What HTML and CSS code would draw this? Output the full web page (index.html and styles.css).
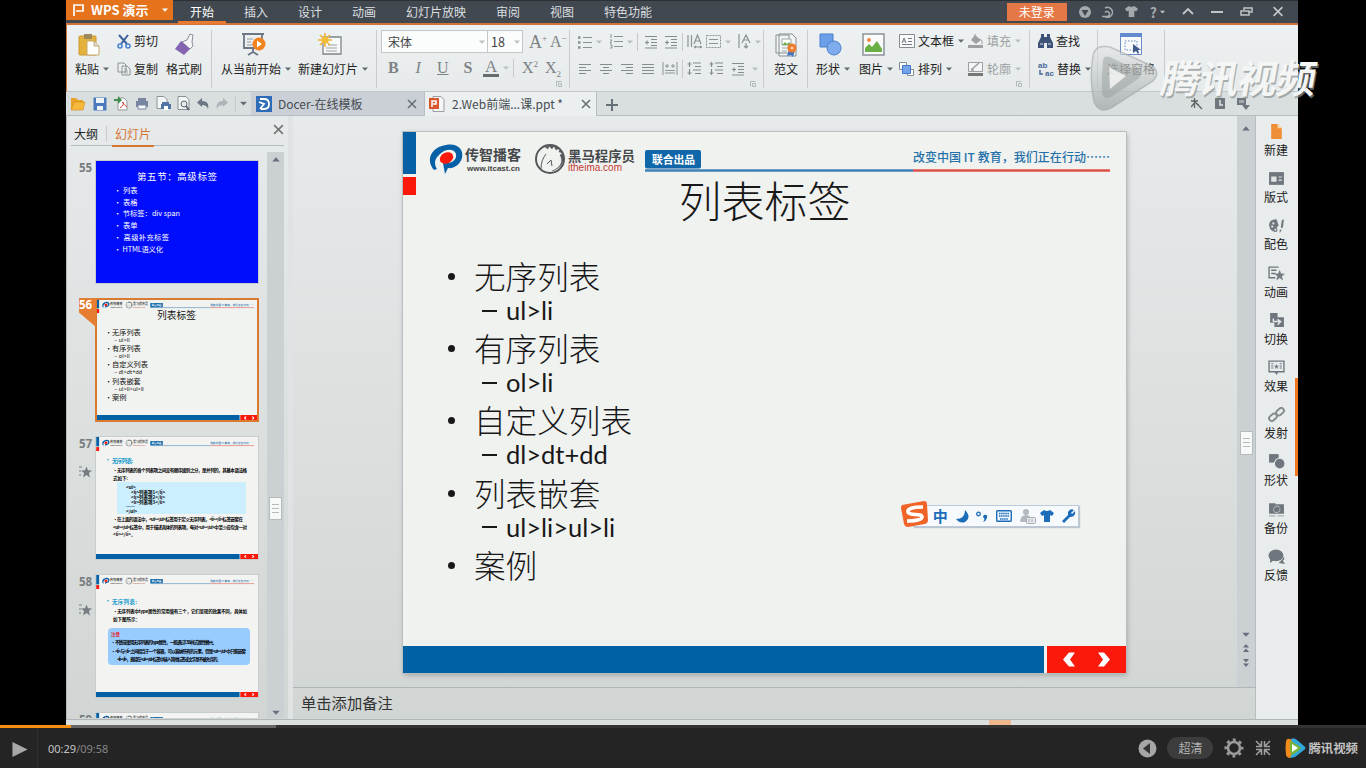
FILE: index.html
```html
<!DOCTYPE html>
<html lang="zh-CN">
<head>
<meta charset="utf-8">
<title>WPS 演示</title>
<link rel="stylesheet" href="styles.css">
</head>
<body>
<svg class="defs" aria-hidden="true">
  <symbol id="arr" viewBox="0 0 6 4"><path d="M0 .5h6L3 3.8z" fill="currentColor"/></symbol>
  <symbol id="lines-l" viewBox="0 0 14 14"><path d="M1 2.5h12M1 5.5h7M1 8.5h12M1 11.5h7" stroke="#868b8e" stroke-width="1.2"/></symbol>
  <symbol id="lines-c" viewBox="0 0 14 14"><path d="M1 2.5h12M4 5.5h6M1 8.5h12M4 11.5h6" stroke="#868b8e" stroke-width="1.2"/></symbol>
  <symbol id="lines-r" viewBox="0 0 14 14"><path d="M1 2.5h12M6 5.5h7M1 8.5h12M6 11.5h7" stroke="#868b8e" stroke-width="1.2"/></symbol>
  <symbol id="lines-j" viewBox="0 0 14 14"><path d="M1 2.5h12M1 5.5h12M1 8.5h12M1 11.5h12" stroke="#868b8e" stroke-width="1.2"/></symbol>
  <symbol id="indent" viewBox="0 0 14 14"><path d="M1 1.5h12M7 4.5h6M7 7.5h6M7 10.5h6M1 13h12M1 7.5h4M3 5.5v4" stroke="#868b8e" stroke-width="1.2"/></symbol>
  <symbol id="spacing" viewBox="0 0 15 15"><path d="M6 2h8M8 5.500h6M6 9h8M8 12.500h6M2.500 1v5M.5 3h4M2.500 8v6M.5 12h4" stroke="#868b8e" stroke-width="1.200"/></symbol>
  <symbol id="launcher" viewBox="0 0 6 6"><path d="M.5 5.500v-5h5M2.500 2.500h3v3h-3z" fill="none" stroke="#a5aaad" stroke-width=".8"/></symbol>
  <symbol id="close" viewBox="0 0 10 10"><path d="M1 1l8 8M9 1L1 9" stroke="currentColor" stroke-width="1.500"/></symbol>
  <symbol id="shirt" viewBox="0 0 14 14"><path d="M4 1q3 2 6 0l4 3-2 3-2-1v7H4V6L2 7 0 4z" fill="currentColor"/></symbol>
  <symbol id="star" viewBox="0 0 12 12"><path d="M6 0l1.600 4.200L12 4.400 8.600 7.200 9.800 12 6 9.200 2.200 12l1.200-4.800L0 4.400l4.400-.2z" fill="#777c82"/></symbol>
  <symbol id="slide-head" viewBox="0 0 723 64">
    <rect width="13" height="42" y="0" x="0" fill="#0660a6"/><rect y="45" width="13" height="18" fill="#fb190c"/>
    <path d="M31 38C22 27 29 15 43 13 54 11 61 17 59 26 57 33 50 37 45 36L42 42 40 31C49 32 54 28 53 22 51 16 42 17 37 22 31 27 31 32 34 37z" fill="#0660a6"/>
    <ellipse cx="43.500" cy="26" rx="7" ry="5.500" transform="rotate(-28 43.500 26)" fill="#fb190c"/>
    <text x="62" y="28" class="logo-cn" textLength="56">传智播客</text>
    <text x="64" y="39" class="logo-en" textLength="53">www.itcast.cn</text>
    <circle cx="147" cy="27" r="14" fill="none" stroke="#53585b" stroke-width="2"/>
    <path d="M142 15l3 2 1-3 3 3 2-3 2 4 4-2-1 4 4 1-3 2c4 7 0 13-8 16 8-2 13-9 11-16-3-8-10-11-18-8z" fill="#53585b" stroke="#53585b" stroke-width=".4"/>
    <path d="M138 37q0-9 5-15M144 32l4-4 1 6" fill="none" stroke="#53585b"/>
    <text x="165" y="29" class="logo-cn dark" textLength="67">黑马程序员</text>
    <text x="165" y="39" class="logo-red" textLength="54">itheima.com</text>
    <path d="M242 38.500h268" stroke="#3c80b6" stroke-width="2.400"/><path d="M510 38.500h197" stroke="#df5249" stroke-width="2.400"/>
    <rect x="242" y="18" width="56" height="18.500" rx="2" fill="#0f67aa"/>
    <text x="249" y="31.500" class="badge-txt" textLength="43">联合出品</text>
    <text x="510" y="30" class="slogan" textLength="197">改变中国 IT 教育，我们正在行动⋯⋯</text>
  </symbol>
  <symbol id="slide-foot" viewBox="0 0 723 27" preserveAspectRatio="none">
    <path d="M0 0h641v27H0z" fill="#0260a5"/><path d="M644 0h79v27h-79z" fill="#fb190c"/>
    <path d="M660 13.500l6-7h6l-5 7 5 7h-6zM707 13.500l-6-7h-6l5 7-5 7h6z" fill="#fff"/>
  </symbol>
</svg>

<main class="stage">
<div class="app">
  <header class="titlebar">
    <div class="brand"><svg width="12" height="12" viewBox="0 0 12 12"><path d="M2 12V1h9v6H4" fill="none" stroke="#fff" stroke-width="1.700"/></svg><b>WPS 演示</b><svg class="a w" width="6" height="4"><use href="#arr"/></svg></div>
    <nav class="menu"><span class="on">开始</span><span>插入</span><span>设计</span><span>动画</span><span>幻灯片放映</span><span>审阅</span><span>视图</span><span>特色功能</span></nav>
    <div class="wincontrols">
      <span class="login">未登录</span>
      <svg width="12" height="12" viewBox="0 0 12 12"><circle cx="6" cy="6" r="6" fill="#a4a9ad"/><path d="M2.500 4h7L6 10z" fill="#41484f"/></svg>
      <svg width="12" height="12" viewBox="0 0 12 12"><path d="M3 2a5 5 0 1 1-1 8M0 10.500h5a2.500 2.500 0 1 0-2-4" fill="none" stroke="#a4a9ad" stroke-width="1.500"/></svg>
      <svg width="13" height="13" color="#a4a9ad"><use href="#shirt"/></svg>
      <span class="q">?<svg class="a" width="5" height="4"><use href="#arr"/></svg></span>
      <svg class="up" width="12" height="7" viewBox="0 0 12 7"><path d="M1 6l5-5 5 5" fill="none" stroke="#c1c5c8" stroke-width="1.800"/></svg>
      <svg class="mn" width="12" height="12" viewBox="0 0 12 12"><path d="M0 6h12" stroke="#c1c5c8" stroke-width="2"/></svg>
      <svg class="rs" width="13" height="10" viewBox="0 0 13 10"><path d="M4 3V1h8v4H9M1 4h8v4H1z" fill="none" stroke="#c1c5c8" stroke-width="1.500"/></svg>
      <svg class="cl" width="12" height="11" color="#c1c5c8" viewBox="0 0 10 10"><use href="#close"/></svg>
    </div>
  </header>

  <section class="ribbon">
    <div class="group g-clip">
      <div class="big"><svg width="22" height="24" viewBox="0 0 22 24"><rect x="1" y="3" width="17" height="19" rx="1" fill="#e5b13d" stroke="#c99735"/><path d="M6 1h8v5H6z" fill="#9d8a58"/><path d="M9 8h7l5 5v9H9z" fill="#fff" stroke="#c5a86a"/><path d="M16 8v5h5" fill="#ddd" stroke="#c5a86a"/></svg><span>粘贴<svg class="a" width="6" height="4"><use href="#arr"/></svg></span></div>
      <div class="two">
        <span><svg width="14" height="15" viewBox="0 0 14 15"><path d="M2 1l8 9M11 1L4 10" stroke="#3e5f9d" stroke-width="2"/><circle cx="3" cy="12" r="2" fill="none" stroke="#4a83cf" stroke-width="1.600"/><circle cx="11" cy="12" r="2" fill="none" stroke="#4a83cf" stroke-width="1.600"/></svg>剪切</span>
        <span><svg width="14" height="14" viewBox="0 0 14 14"><path d="M1 1h6l2 2v7H1zM5 4h5l3 3v6H5z" fill="#eef0f0" stroke="#899097"/><path d="M7 7h3M7 9h4M7 11h4" stroke="#899097" stroke-width=".7"/></svg>复制</span>
      </div>
      <div class="big brush"><svg width="20" height="23" viewBox="0 0 20 23"><path d="M8 9l5-2 3-6 3 1-1 7 1 4-3 3z" fill="#f5f5f7" stroke="#8d8a9a"/><path d="M7 8l9 8-6 6L1 16z" fill="#8464b0"/></svg><span>格式刷</span></div>
    </div>
    <div class="group g-show">
      <div class="big s1"><svg width="25" height="23" viewBox="0 0 25 23"><path d="M1 1h22M3 1v14h18V1M12 15v4M7 22l5-3 5 3" fill="none" stroke="#6d7684" stroke-width="1.800"/><path d="M6 6h6M6 9h4M6 12h6" stroke="#929aa3"/><circle cx="18" cy="11" r="6.500" fill="#f2831c"/><path d="M16 7.500l5 3.500-5 3.500z" fill="#fff"/></svg><span>从当前开始<svg class="a" width="6" height="4"><use href="#arr"/></svg></span></div>
      <div class="big s2"><svg width="25" height="23" viewBox="0 0 25 23"><path d="M5 4h18v17H5z" fill="#f8f9f9" stroke="#7e848a" stroke-width="1.300"/><path d="M10 12h9M8 15h11M8 18h11" stroke="#9ba1a6"/><path d="M7 0v14M0 7h14M2 2l10 10M12 2L2 12" stroke="#edb33c" stroke-width="1.600"/><circle cx="7" cy="7" r="3.500" fill="#f5bc38"/></svg><span>新建幻灯片<svg class="a" width="6" height="4"><use href="#arr"/></svg></span></div>
    </div>
    <div class="group g-font">
      <div class="r1"><span class="combo">宋体<svg class="a l" width="6" height="4"><use href="#arr"/></svg></span><span class="combo num">18<svg class="a l" width="6" height="4"><use href="#arr"/></svg></span><span class="serif big-a">A<sup>+</sup></span><span class="serif sm-a">A<sup>−</sup></span></div>
      <div class="r2 serif"><b>B</b><i>I</i><u>U</u><b class="st">S</b><b class="ca">A</b><svg class="a l" width="6" height="4"><use href="#arr"/></svg><em class="bar"></em><span class="x">X<sup>2</sup></span><span class="x">X<sub>2</sub></span></div>
      <svg class="launch" width="6" height="6"><use href="#launcher"/></svg>
    </div>
    <div class="group g-para">
      <div class="ic"><svg width="14" height="14" viewBox="0 0 14 14"><path d="M5 2.500h9M5 7.500h9M5 12.500h9" stroke="#8c9194"/><path d="M0 2.500h2.500M0 7.500h2.500M0 12.500h2.500" stroke="#8c9194" stroke-width="2.500"/></svg><svg class="a l m4" width="6" height="4"><use href="#arr"/></svg>
        <svg class="m7" width="14" height="15" viewBox="0 0 14 15"><path d="M5 2.500h9M5 7.500h9M5 12.500h9" stroke="#8c9194"/><path d="M2 0v4M1 6h2L1 9h2M1 11h2v3H1" fill="none" stroke="#8c9194"/></svg><svg class="a l m4" width="6" height="4"><use href="#arr"/></svg><em class="bar"></em>
        <svg class="m6" width="14" height="14"><use href="#indent"/></svg><svg class="m6" width="14" height="14"><use href="#indent"/></svg><em class="bar"></em>
        <svg class="m4" width="15" height="15" viewBox="0 0 15 15"><path d="M1 1v12M4.500 1v12M7 10L10.500 1 14 10M8.500 7h4M8 13h6m-5-1-1.500 1L9 14m4-2 1.500 1-1.500 1" fill="none" stroke="#8c9194" stroke-width="1.200"/></svg>
        <svg class="m4" width="15" height="13" viewBox="0 0 15 13"><rect x=".5" y=".5" width="14" height="12" fill="none" stroke="#8c9194" stroke-dasharray="2 1"/><path d="M3 4.500h9M3 8.500h9" stroke="#8c9194"/></svg><svg class="a l m4" width="6" height="4"><use href="#arr"/></svg>
        <svg class="m7" width="13" height="15" viewBox="0 0 13 15"><path d="M1 0v14M4 9L8 1l4 8M6 6h4M8 9v5M6 12l2 2 2-2" fill="none" stroke="#8c9194" stroke-width="1.200"/></svg><svg class="a l m4" width="6" height="4"><use href="#arr"/></svg></div>
      <div class="ic low"><svg width="14" height="14"><use href="#lines-l"/></svg><svg width="14" height="14"><use href="#lines-c"/></svg><svg width="14" height="14"><use href="#lines-r"/></svg><svg width="14" height="14"><use href="#lines-j"/></svg>
        <svg width="16" height="13" viewBox="0 0 16 13"><path d="M1 0v13M15 0v13M3 4h4m2 0h4M5 2v4M11 2v4M3 8.500h10M3 11h10" stroke="#8c9194"/></svg><em class="bar"></em>
        <svg width="15" height="15"><use href="#spacing"/></svg><svg width="15" height="15"><use href="#spacing"/></svg><svg width="14" height="14"><use href="#indent"/></svg><svg class="a l" width="6" height="4"><use href="#arr"/></svg></div>
      <svg class="launch" width="6" height="6"><use href="#launcher"/></svg>
    </div>
    <div class="group g-doc"><div class="big"><svg width="23" height="24" viewBox="0 0 23 24"><path d="M1 2h13v18H1zM4 1h13l4 4v18H4z" fill="#f2f4f4" stroke="#868d94"/><path d="M7 6h9v6H7z" fill="#fff" stroke="#9aa"/><path d="M7 12l3-3 2 2 2-2 2 3z" fill="#6fb04d"/><path d="M7 15h6M7 18h5" stroke="#9aa"/><path d="M14 17l-2 6 4-1 2 2 2-7z" fill="#4072bd"/><circle cx="17" cy="15" r="4.500" fill="#ed7b2b"/><circle cx="17" cy="15" r="1.600" fill="#fac79c"/></svg><span>范文</span></div></div>
    <div class="group g-draw">
      <div class="big"><svg width="23" height="23" viewBox="0 0 23 23"><path d="M1 1h13v13H1z" fill="#6c9fe8" stroke="#4b7fcb"/><circle cx="15" cy="15" r="7" fill="#7eacec" stroke="#4b7fcb"/></svg><span>形状<svg class="a" width="6" height="4"><use href="#arr"/></svg></span></div>
      <div class="big"><svg width="23" height="23" viewBox="0 0 23 23"><path d="M1 1h21v21H1z" fill="#fafafa" stroke="#8c9399" stroke-width="1.500"/><circle cx="7" cy="7" r="2" fill="#ed8b48"/><path d="M3 19v-4l4-4 3 3 5-6 5 8v3z" fill="#6bae45"/></svg><span>图片<svg class="a" width="6" height="4"><use href="#arr"/></svg></span></div>
      <div class="two t1"><span><svg width="16" height="14" viewBox="0 0 16 14"><path d="M.5.5h15v13H.5z" fill="#fafafa" stroke="#858c93"/><path d="M3 9l2-5 2 5M4 7h2M9 4.500h4M9 7.500h4M3 10.500h10" fill="none" stroke="#747b84"/></svg>文本框<svg class="a" width="6" height="4"><use href="#arr"/></svg></span>
        <span><svg width="16" height="14" viewBox="0 0 16 14"><path d="M.5.500h7v7h-7zM8.500 7.500h6v6h-6z" fill="#fff" stroke="#848c95"/><path d="M3.500 3.500h8v8h-8z" fill="#76a3ec" stroke="#4479ca"/></svg>排列<svg class="a" width="6" height="4"><use href="#arr"/></svg></span></div>
      <div class="two t2"><span><svg width="16" height="14" viewBox="0 0 16 14"><path d="M7 1l6 5-5 4-5-4zM0 11h15v3H0z" fill="#9da1a4"/><path d="M12 5q3 2 2 5M7 0v5" stroke="#9da1a4" fill="none"/></svg>填充<svg class="a l" width="6" height="4"><use href="#arr"/></svg></span>
        <span><svg width="16" height="14" viewBox="0 0 16 14"><path d="M.5.500h14v9H.5z" fill="#f4f5f5" stroke="#9b9fa3"/><path d="M3 8l8-7M3 8l3 0" stroke="#9b9fa3" stroke-width="1.500"/><path d="M0 11h15v3H0z" fill="#777"/></svg>轮廓<svg class="a l" width="6" height="4"><use href="#arr"/></svg></span></div>
      <svg class="launch" width="6" height="6"><use href="#launcher"/></svg>
    </div>
    <div class="group g-find"><div class="two">
      <span><svg width="15" height="14" viewBox="0 0 15 14"><path d="M3 0h3v3h3V0h3v3l3 6v5H9V9H6v5H0V9l3-6z" fill="#3d5277"/><path d="M2 10h3M10 10h3" stroke="#dbe1e6"/></svg>查找</span>
      <span><svg class="abac" width="16" height="14" viewBox="0 0 16 14"><text x="0" y="6">ab</text><text x="7" y="14">ac</text><path d="M2 8v4h3" fill="none" stroke="#48699b" stroke-width="1.500"/></svg>替换<svg class="a" width="6" height="4"><use href="#arr"/></svg></span></div></div>
    <div class="group g-sel"><div class="big"><svg width="22" height="22" viewBox="0 0 22 22"><path d="M.5.500h21v21H.5z" fill="#f7f9fb" stroke="#6b8cc8"/><path d="M0 0h22v4H0z" fill="#6389ce"/><path d="M5 8h12v9H5z" fill="none" stroke="#6586b8" stroke-dasharray="1.500 1.500"/><path d="M13 11v9l3-2 2 3 1-1-1-3h3z" fill="#405a87"/></svg><span>选择窗格</span></div></div>
  </section>

  <section class="tabs">
    <div class="quick">
      <svg width="16" height="14" viewBox="0 0 16 14"><path d="M1 12V1h5l2 2h5v3" fill="#eaa42c"/><path d="M4 5h11l-2 8H1z" fill="#f7b93b" stroke="#cf8c20" stroke-width=".6"/></svg>
      <svg width="14" height="14" viewBox="0 0 14 14"><path d="M.5.500h13v13H.5z" fill="#4a79bd"/><path d="M3 1h8v5H3zM4 9h6v4H4z" fill="#eef3f8"/></svg>
      <svg width="14" height="15" viewBox="0 0 14 15"><path d="M4 2h6l3 3v9H4z" fill="#fafafa" stroke="#999"/><path d="M0 3h4V0l4 4-4 4V5H0z" fill="#418e50"/><path d="M6 12q5-4 3-6-2 0 4 5" fill="none" stroke="#d6423c"/></svg>
      <svg width="14" height="13" viewBox="0 0 14 13"><path d="M3 1h8v3H3zM1 4h12v6H1z" fill="#7885a0"/><path d="M3 8h8v4H3z" fill="#f9fafb" stroke="#7885a0"/></svg>
      <svg width="15" height="15" viewBox="0 0 15 15"><path d="M1 .500h7l3 3v9H1z" fill="#f5f6f6" stroke="#8a929e"/><path d="M6 6h7v2h2v5H5V8h1z" fill="#5275a7"/><path d="M8 10h4v4H8z" fill="#fff"/></svg>
      <svg width="13" height="15" viewBox="0 0 13 15"><path d="M1 .500h8l3 3v10H1z" fill="#f5f6f6" stroke="#8a8f96"/><circle cx="7" cy="8" r="3" fill="#e4eaef" stroke="#5d646f"/><path d="M9 10l3 4" stroke="#5d646f" stroke-width="2"/></svg>
      <svg width="12" height="12" viewBox="0 0 12 12"><path d="M0 4.500L5 0v3c6 0 7 4 6 8-1-3-3-4-6-4v2z" fill="#6d7783"/></svg>
      <svg width="12" height="12" viewBox="0 0 12 12"><path d="M12 4.500L7 0v3C1 3 0 7 1 11c1-3 3-4 6-4v2z" fill="#adb4ba"/></svg>
      <em class="bar"></em><svg class="a" width="7" height="5" viewBox="0 0 6 4"><use href="#arr"/></svg>
    </div>
    <div class="tab docer"><svg width="16" height="16" viewBox="0 0 16 16"><path d="M0 0h16v16H0z" fill="#2e6cb8"/><path d="M4 3h4q5 0 5 5t-5 5H5M3 6l5 2-4 5" fill="none" stroke="#fff" stroke-width="1.800"/></svg><span>Docer-在线模板</span><svg class="x" width="10" height="10"><use href="#close"/></svg></div>
    <div class="tab active"><svg width="16" height="16" viewBox="0 0 16 16"><path d="M4 .500h8l3 3v12H4z" fill="#f5f6f6" stroke="#999fa3"/><path d="M0 2h10v11H0z" fill="#d9572d"/><path d="M3 11V5h4v3H4" fill="none" stroke="#fff" stroke-width="1.500"/></svg><span>2.Web前端...课.ppt *</span><svg class="x" width="10" height="10"><use href="#close"/></svg></div>
    <div class="plus"><svg width="12" height="12" viewBox="0 0 12 12"><path d="M0 6h12M6 0v12" stroke="#667078" stroke-width="2"/></svg></div>
    <div class="tools"><svg width="12" height="12" viewBox="0 0 12 12"><path d="M0 3h7M3.500 0v10M0 9l5-6M4 4l7 7M5 5l3 2" stroke="#5d6264" stroke-width="1.300"/></svg><svg width="10" height="11" viewBox="0 0 10 11"><path d="M0 0h10v11H0z" fill="#70777c"/><path d="M5 2v5h3" fill="none" stroke="#dfe3e3" stroke-width="1.500"/></svg><svg width="13" height="12" viewBox="0 0 13 12"><path d="M0 0h9v7H0zM5 7h8l-4 5z" fill="#70777c"/><path d="M2 2h5v3H2z" fill="#a2a8ab"/></svg></div>
  </section>

  <section class="work">
    <aside class="outline">
      <div class="otabs"><span>大纲</span><em class="bar"></em><span class="on">幻灯片</span><svg width="11" height="11" viewBox="0 0 10 10"><use href="#close"/></svg></div>
      <div class="olist">
        <div class="thumbs">
          <div class="row"><span class="no">55</span>
            <svg class="thumb" width="162" height="122" viewBox="0 0 162 122"><path d="M0 0h162v122H0z" fill="#000cfc"/><g class="blue-t"><text x="41" y="18.500" class="h" textLength="80">第五节：高级标签</text><text x="18" y="32">• 列表</text><text x="18" y="44">• 表格</text><text x="18" y="55" textLength="66">• 节标签：div span</text><text x="18" y="67">• 表单</text><text x="18" y="79" textLength="55">• 高级补充标签</text><text x="18" y="91" textLength="49">• HTML语义化</text></g></svg></div>
          <div class="row sel"><span class="no">56</span>
            <svg class="thumb" width="164" height="124" viewBox="-1 -1 164 124"><path d="M0 0h162v122H0z" fill="#f1f3f0"/><use href="#slide-head" width="162" height="14.300"/><g class="mini"><text x="61" y="20" class="h" textLength="39">列表标签</text><text x="9" y="35.500">•</text><text x="16" y="35.500">无序列表</text><text x="18" y="42.500" class="s">– ul&gt;li</text><text x="9" y="51.500">•</text><text x="16" y="51.500">有序列表</text><text x="18" y="58.500" class="s">– ol&gt;li</text><text x="9" y="68">•</text><text x="16" y="68">自定义列表</text><text x="18" y="75" class="s">– dl&gt;dt+dd</text><text x="9" y="84.500">•</text><text x="16" y="84.500">列表嵌套</text><text x="18" y="91.500" class="s">– ul&gt;li&gt;ul&gt;li</text><text x="9" y="101">•</text><text x="16" y="101">案例</text></g><use href="#slide-foot" y="116" width="162" height="6"/><rect x="0" y="0" width="162" height="122" fill="none" stroke="#dc7930" stroke-width="2"/></svg></div>
          <div class="row"><span class="no">57<svg class="anim" width="13" height="12" viewBox="0 0 13 12"><path d="M0 1h3M0 5h2M0 9h2" stroke="#777c82"/><use href="#star" x="2" width="11" height="12"/></svg></span>
            <svg class="thumb" width="162" height="122" viewBox="0 0 162 122"><path d="M0 0h162v122H0z" fill="#f3f4f2"/><use href="#slide-head" width="162" height="14.300"/><g class="tiny"><text x="9" y="25" class="cy">•</text><text x="16" y="26" class="cy" textLength="21">无序列表:</text><text x="17" y="35" textLength="134">•无序列表的各个列表项之间没有顺序级别之分，是并列的，其基本语法格</text><text x="17" y="43">式如下:</text><path d="M21 45h129v32H21z" fill="#ccefff"/><text x="30" y="52">&lt;ul&gt;</text><text x="35" y="57">&lt;li&gt;列表项1&lt;/li&gt;</text><text x="35" y="62">&lt;li&gt;列表项2&lt;/li&gt;</text><text x="35" y="67">&lt;li&gt;列表项3&lt;/li&gt;</text><text x="30" y="71">……</text><text x="30" y="76">&lt;/ul&gt;</text><text x="17" y="84" textLength="130">•在上面的语法中，&lt;ul&gt;&lt;/ul&gt;标签用于定义无序列表，&lt;li&gt;&lt;/li&gt;标签嵌套在</text><text x="17" y="92" textLength="134">&lt;ul&gt;&lt;/ul&gt;标签中，用于描述具体的列表项，每对&lt;ul&gt;&lt;/ul&gt;中至少应包含一对</text><text x="17" y="99">&lt;li&gt;&lt;/li&gt;。</text></g><use href="#slide-foot" y="117" width="162" height="5"/></svg></div>
          <div class="row"><span class="no">58<svg class="anim" width="13" height="12" viewBox="0 0 13 12"><path d="M0 1h3M0 5h2M0 9h2" stroke="#777c82"/><use href="#star" x="2" width="11" height="12"/></svg></span>
            <svg class="thumb" width="162" height="122" viewBox="0 0 162 122"><path d="M0 0h162v122H0z" fill="#f3f4f2"/><use href="#slide-head" width="162" height="14.300"/><g class="tiny"><text x="9" y="28" class="cy">•</text><text x="16" y="29" class="cy" textLength="25">无序列表:</text><text x="17" y="38" textLength="134">•无序列表中type属性的常用值有三个，它们呈现的效果不同，具体如</text><text x="17" y="46">如下图所示：</text><rect x="12" y="53" width="142" height="37" rx="4" fill="#99ccfe"/><text x="15" y="61" class="re">注意</text><g class="hv"><text x="15" y="69" textLength="106">•  不赞成使用无序列表的type属性，一般通过CSS样式属性替代。</text><text x="15" y="78" textLength="135">•  &lt;li&gt;与&lt;/li&gt;之间相当于一个容器，可以容纳所有的元素，但是&lt;ul&gt;&lt;/ul&gt;中只能嵌套</text><text x="21" y="86" textLength="104">&lt;li&gt;&lt;/li&gt;，直接在&lt;ul&gt;&lt;/ul&gt;标签中输入其他标签或文字是不被允许的。</text></g></g><use href="#slide-foot" y="117" width="162" height="5"/></svg></div>
          <div class="row"><span class="no">59</span><svg class="thumb" width="162" height="122" viewBox="0 0 162 122"><path d="M0 0h162v122H0z" fill="#f3f4f2"/><use href="#slide-head" width="162" height="14.300"/></svg></div>
        </div>
        <div class="sbar"><svg width="8" height="5" color="#687080" class="flip"><use href="#arr"/></svg><div class="grip"><i></i><i></i><i></i></div><svg width="8" height="5" color="#687080"><use href="#arr"/></svg></div>
      </div>
    </aside>

    <div class="main">
      <div class="editor">
        <div class="canvas">
          <article class="slide">
            <svg width="723" height="64"><use href="#slide-head"/></svg>
            <h1>列表标签</h1>
            <ul class="body">
              <li>无序列表<p>ul&gt;li</p></li><li>有序列表<p>ol&gt;li</p></li><li>自定义列表<p>dl&gt;dt+dd</p></li><li>列表嵌套<p>ul&gt;li&gt;ul&gt;li</p></li><li>案例</li>
            </ul>
            <svg class="foot" width="723" height="27"><use href="#slide-foot"/></svg>
            <div class="ime">
              <svg class="sogou" width="28" height="28" viewBox="0 0 28 28"><path d="M1 5L23 1q3 0 3 3l1 16q0 3-3 4L7 27q-3 0-4-3L0 8q0-2 1-3z" fill="#ef6427"/><path d="M22 7Q6 7 7 12c1 4 14 1 14 5 0 3-8 4-15 4" fill="none" stroke="#fff" stroke-width="3.600"/></svg>
              <b>中</b>
              <svg width="13" height="13" viewBox="0 0 13 13"><path d="M9 0q7 7 0 12-5 2-9-3Q9 9 9 0z" fill="#1d6cba"/></svg>
              <svg width="12" height="13" viewBox="0 0 12 13"><circle cx="2.500" cy="4" r="1.800" fill="none" stroke="#1d6cba" stroke-width="1.300"/><path d="M8 5q4-1 3 3-1 3-4 4 2-3 1-4-2-1 0-3z" fill="#1d6cba"/></svg>
              <svg width="16" height="12" viewBox="0 0 16 12"><rect x=".7" y=".7" width="14.600" height="10.600" rx="1" fill="#eef6fc" stroke="#1d6cba" stroke-width="1.400"/><path d="M3 3.500h10M3 6h10M4 9h8" stroke="#1d6cba" stroke-width="1.600" stroke-dasharray="1.500 .6"/></svg>
              <svg width="16" height="15" viewBox="0 0 16 15"><circle cx="6" cy="3" r="3" fill="#b3b9bf"/><path d="M0 12q1-6 6-6 4 0 5 4v3H1z" fill="#b3b9bf"/><rect x="6.500" y="8.500" width="9" height="6" rx="1" fill="#e7e9eb" stroke="#a7acb2"/><path d="M9 10v3M12 10v3" stroke="#a7acb2"/></svg>
              <svg class="skin" width="14" height="14" color="#1d6cba"><use href="#shirt"/></svg>
              <svg width="14" height="14" viewBox="0 0 14 14"><path d="M13 2l-3 3-1-1 3-3Q8-1 6 3v3L0 12l2 2 6-6q6 0 5-6z" fill="#1d6cba"/></svg>
            </div>
          </article>
        </div>
        <div class="sbar right"><svg width="8" height="5" color="#687080" class="flip"><use href="#arr"/></svg><div class="grip"><i></i><i></i><i></i></div><div class="pages"><svg width="8" height="5" color="#687080"><use href="#arr"/></svg><svg width="6" height="8" viewBox="0 0 6 8" color="#687080"><path d="M0 3.500L3 0l3 3.500zM0 8l3-3.500L6 8z" fill="currentColor"/></svg><svg width="6" height="8" viewBox="0 0 6 8"><path d="M0 0h6L3 3.500zM0 4.500h6L3 8z" fill="#687080"/></svg></div></div>
      </div>
      <div class="notes">单击添加备注</div>
    </div>

    <aside class="side">
      <div><svg viewBox="0 0 16 14"><path d="M3 0h6l4 4v10H3z" fill="#ee8e35"/><path d="M9 0v4h4z" fill="#f9d3ad"/></svg>新建</div>
      <div><svg viewBox="0 0 16 14"><path d="M1 1h14v12H1z" fill="#70767e"/><path d="M3 5h5v5H3zM10 5h3v1h-3zM10 8h3v1h-3z" fill="#dfe3e4"/></svg>版式</div>
      <div><svg viewBox="0 0 16 14"><path d="M8 1Q1 1 1 7q1 6 7 6 2-2 0-4l2-2zM13 2l2-1-1 8h-2zM11 11h2l-2 3z" fill="#70767e"/><g fill="#e4e8e9"><circle cx="5" cy="5" r="1"/><circle cx="4" cy="8" r="1"/><circle cx="7" cy="11" r="1"/></g></svg>配色</div>
      <div><svg viewBox="0 0 16 14"><path d="M10 1H1v10h6M3 4h5M3 7h4" fill="none" stroke="#70767e" stroke-width="1.300"/><use href="#star" x="6" y="3" width="10" height="11"/></svg>动画</div>
      <div><svg viewBox="0 0 16 14"><path d="M2 0h7v4h6v9H6V9H2z" fill="#70767e"/><path d="M5 5v3h6M9 6l3 2-3 3" fill="none" stroke="#e5e8ea" stroke-width="1.300"/></svg>切换</div>
      <div><svg viewBox="0 0 16 14"><path d="M1 1h14v10H1z" fill="none" stroke="#70767e" stroke-width="1.300"/><path d="M6 11h4l-2 3z" fill="#70767e"/><path d="M4 3v6M12 3v6" stroke="#70767e" stroke-dasharray="1 1" stroke-width="2"/><use href="#star" x="5.500" y="3" width="5" height="6"/></svg>效果</div>
      <div><svg viewBox="0 0 16 14"><g fill="none" stroke="#858a8e" stroke-width="1.800"><rect x="7" y="2" width="8" height="5" rx="2.500" transform="rotate(-42 11 4)"/><rect x="1" y="7" width="8" height="5" rx="2.500" transform="rotate(-42 5 10)"/></g></svg>发射</div>
      <div><svg viewBox="0 0 16 14"><path d="M1 0h9v8H1z" fill="#70767e"/><circle cx="11" cy="9" r="5" fill="#70767e" stroke="#e8ebec"/></svg>形状</div>
      <div><svg viewBox="0 0 16 14"><path d="M1 1h6v1h8v9H1z" fill="#70767e"/><path d="M6 9a3 3 0 0 1 5-4m0 1a3 3 0 0 1-5 3M1 13h6M9 13h6" fill="none" stroke="#a9aeb2"/></svg>备份</div>
      <div><svg viewBox="0 0 16 14"><ellipse cx="7.500" cy="6" rx="7" ry="5.500" fill="#70767e"/><path d="M2 9v4l4-3M15 7q1 3-1 4l2 3-6-1 4-4z" fill="#70767e"/></svg>反馈</div>
      <i class="handle"></i>
    </aside>
  </section>
  <div class="status"><i></i></div>
</div>
<svg class="watermark" width="240" height="75" viewBox="0 0 240 75">
  <defs><linearGradient id="wg" x1="0" y1="0" x2="0" y2="1"><stop offset="0" stop-color="#e4e6e6" stop-opacity=".6"/><stop offset="1" stop-color="#9fa5a6" stop-opacity=".7"/></linearGradient></defs>
  <path d="M5 14Q7 2 22 5l42 19q9 6 1 15L23 66Q11 72 6 60 1 37 5 14z" fill="url(#wg)" stroke="#a4a9a9" stroke-opacity=".6" stroke-width="1.500"/>
  <path d="M15 20Q15 13 22 15l28 14q5 3 0 8L23 55q-8 3-9-4-1-15 1-31z" fill="#999fa0" fill-opacity=".5"/>
  <path d="M21 25l17 9-16 13z" fill="#f5f6f6" fill-opacity=".85"/>
  <g transform="translate(71 51) skewX(-10)"><text x="1.500" y="2" class="wm-shade" textLength="155">腾讯视频</text><text x="0" y="0" class="wm" textLength="155">腾讯视频</text></g>
</svg>
</main>

<footer class="player">
  <div class="progress"><i class="played"></i><i class="buffered"></i></div>
  <div class="controls">
    <div class="play"><svg width="16" height="18" viewBox="0 0 16 18"><path d="M0 1l16 8-16 8z" fill="#a8a8a8"/></svg></div>
    <div class="time"><span>00:29</span>/09:58</div>
    <svg class="vol" width="19" height="19" viewBox="0 0 19 19"><circle cx="9.500" cy="9.500" r="9" fill="#a6a6a6"/><path d="M5 9.500L12 4v11z" fill="#333"/></svg>
    <span class="hd">超清</span>
    <svg class="gear" width="20" height="20" viewBox="0 0 20 20"><circle cx="10" cy="10" r="6" fill="none" stroke="#9b9b9b" stroke-width="2.600"/><circle cx="10" cy="10" r="8.200" fill="none" stroke="#9b9b9b" stroke-width="2.600" stroke-dasharray="3 3.440" stroke-dashoffset="1.500"/></svg>
    <svg class="shrink" width="16" height="16" viewBox="0 0 16 16"><path d="M1 1l5 5M15 1l-5 5M1 15l5-5M15 15l-5-5M6.500 1v5.500H1M9.500 1v5.500H15M6.500 15V9.500H1M9.500 15V9.500H15" fill="none" stroke="#a0a0a0" stroke-width="1.500"/></svg>
    <svg class="tv" width="21" height="20" viewBox="0 0 21 20"><path d="M1 3Q2 0 5 1l5 2v14l-5 3q-3 0-4-3-1-7 0-14z" fill="#f28a18"/><path d="M6 1q3-2 6 1l7 6q3 2 0 4l-9 7-5 1q6-10 1-19z" fill="#31a8dc"/><path d="M5 3q9 4 11 7-4 5-10 7-2-7-1-14z" fill="#75b63b"/><path d="M7 6l6 4-6 4z" fill="#fff"/></svg>
    <b class="tvname">腾讯视频</b>
  </div>
</footer>
</body>
</html>
```
FILE: styles.css
```css
* { box-sizing: border-box; }
body { margin: 0; width: 1366px; height: 768px; overflow: hidden; background: #000; font: 12px/16px "Noto Sans CJK SC", sans-serif; color: #222; }
svg { display: block; flex: none; }
em, i { font-style: normal; }
.defs { display: none; }
.stage { position: relative; height: 725px; padding-left: 66px; overflow: hidden; }
.app { width: 1232px; height: 725px; display: flex; flex-direction: column; background: #e8ebeb; }
.a { color: #636a72; }
.a.l { color: #babfc1; }
.a.w { color: #fff; }
.bar { width: 1px; background: #c6cacc; flex: none; }

.titlebar { height: 25px; background: #41484f; border-bottom: 2px solid #cf7438; border-top: 1px solid #2c3035; display: flex; flex: none; }
.brand { width: 107px; height: 20px; margin-top: -1px; padding: 0 5px 0 6px; background: #e5731c; color: #fff; display: flex; align-items: center; gap: 7px; white-space: nowrap; }
.brand b { flex: 1; font-size: 13px; font-weight: 700; }
.menu { display: flex; gap: 6px; margin-left: 5px; color: #dbdfe1; }
.menu span { height: 24px; padding: 3px 12px 0; white-space: nowrap; }
.menu .on { color: #fff; height: 23px; border-bottom: 3px solid #e87b31; }
.wincontrols { display: flex; align-items: center; margin-left: auto; margin-right: 14px; height: 21px; }
.login { width: 60px; height: 18px; margin-right: 12px; background: #e57847; color: #fff; text-align: center; line-height: 17px; }
.wincontrols svg + svg { margin-left: 11px; }
.q { margin-left: 12px; display: flex; align-items: center; gap: 3px; color: #a4a9ad; font-weight: 700; font-size: 14px; }
.q .a { color: #c1c5c8; }
.wincontrols .up { margin-left: 17px; }
.wincontrols .mn { margin-left: 17px; }
.wincontrols .rs { margin-left: 17px; }
.wincontrols .cl { margin-left: 19px; }

.ribbon { height: 67px; display: flex; flex: none; background: linear-gradient(#eef1f1, #e6eaea); border-left: 1px solid #cf7438; border-bottom: 1px solid #c3c7c9; padding-top: 5px; }
.group { position: relative; height: 58px; display: flex; border-right: 1px solid #c8cccd; flex: none; }
.big { display: flex; flex-direction: column; align-items: center; justify-content: space-between; height: 47px; padding-top: 3px; white-space: nowrap; }
.big > span, .two > span { display: flex; align-items: center; gap: 3px; }
.big > svg { margin-left: -6px; }
.brush > svg, .g-doc .big > svg, .g-sel .big > svg { margin-left: 0; }
.two { display: flex; flex-direction: column; gap: 12px; padding-top: 3px; white-space: nowrap; }
.two .a, .big .a { margin-left: 1px; }
.g-clip { width: 145px; padding-left: 8px; }
.g-clip .two { margin-left: 8px; }
.brush { margin-left: 8px; }
.g-show { width: 165px; padding-left: 9px; gap: 7px; }
.g-font { width: 193px; padding-left: 4px; flex-direction: column; }
.r1 { display: flex; align-items: center; height: 23px; }
.combo { display: flex; align-items: center; justify-content: space-between; width: 107px; height: 23px; padding: 0 2px 0 6px; background: #fbfcfc; border: 1px solid #c3c8ca; color: #444; }
.combo.num { width: 36px; margin-left: -1px; padding-left: 3px; font-size: 12.5px; }
.serif { font-family: "Liberation Serif", serif; color: #7d8286; }
.big-a { font-size: 18px; margin-left: 6px; width: 21px; white-space: nowrap; }
.sm-a { font-size: 16px; white-space: nowrap; }
.serif sup, .serif sub { font-size: 9px; line-height: 0; }
.r2 { display: flex; align-items: center; height: 22px; margin-top: 4px; padding-left: 7px; font-size: 16px; }
.r2 > b, .r2 > i, .r2 > u { width: 24.500px; flex: none; }
.r2 > i { font-style: italic; padding-left: 3px; }
.r2 .st { padding-left: 2px; }
.r2 .ca { width: 16px; height: 17px; line-height: 14px; border-bottom: 3px solid #666b70; margin-left: -3px; padding-left: 2px; font-weight: 500; font-size: 17px; }
.r2 .a { margin-left: 4px; }
.r2 .bar { height: 18px; margin: 0 8px 0 4px; }
.r2 .x { width: 25px; white-space: nowrap; }
.r2 .x + .x { margin-left: -1px; }
.launch { position: absolute; right: 7px; bottom: 1px; }
.g-para { width: 194px; padding-left: 8px; flex-direction: column; }
.ic { display: flex; align-items: center; height: 23px; }
.m4 { margin-left: 4px; } .m6 { margin-left: 6px; } .m7 { margin-left: 7px; }
.ic .bar { height: 18px; margin-left: 4px; }
.low { margin-top: 4px; gap: 7px; }
.low .bar { margin: 0 -3px; }
.g-doc { width: 44px; padding-left: 10px; }
.g-draw { width: 222px; padding-left: 8px; }
.g-draw .big + .big { margin-left: 9px; }
.t1 { margin-left: 6px; width: 69px; }
.t2 { color: #9a9fa2; }
.g-find { width: 68px; padding-left: 8px; }
.abac { font: 700 8px "Liberation Sans", sans-serif; fill: #48699b; }
.g-sel { width: 67px; padding-left: 9px; }

.tabs { height: 24px; flex: none; display: flex; background: #d9dfdf; border-bottom: 1px solid #b7bdc2; }
.quick { width: 185px; display: flex; align-items: center; gap: 6.900px; padding-left: 4px; }
.quick .bar { height: 16px; margin-left: 0; margin-right: -3px; }
.tab { display: flex; align-items: center; height: 24px; padding: 0 7px 0 5px; font-size: 12px; white-space: nowrap; color: #454b52; border-right: 1px solid #b7bdc2; }
.tab span { flex: 1; padding-left: 6px; }
.tab .x { color: #646c73; }
.docer { width: 174px; height: 23px; background: #cbd0d6; }
.active { width: 172px; background: #ecefef; padding: 0 5px 0 4px; }
.active span { padding-left: 7px; }
.plus { padding: 7px 9px; }
.tools { display: flex; align-items: center; gap: 12px; margin-left: auto; margin-right: 48px; }

.work { flex: 1; display: flex; min-height: 0; background: linear-gradient(#e7eaea, #d1d5d4); }
.outline { width: 227px; border-right: 5px solid #dfe3e3; border-left: 1px solid #b3b8b9; display: flex; flex-direction: column; flex: none; }
.otabs { height: 30px; margin: 0 4px; border-bottom: 1px solid #b4babd; display: flex; padding: 10px 0 0 3px; flex: none; }
.otabs .bar { height: 15px; margin: 0 5px 0 8px; }
.otabs .on { height: 21px; padding: 0 3px; color: #d57531; border-bottom: 2px solid #d57531; }
.otabs svg { margin: -2px 0 0 auto; color: #777; }
.olist { height: 566px; margin-top: 6px; display: flex; overflow: hidden; }
.thumbs { width: 200px; padding-top: 9px; display: flex; flex-direction: column; gap: 16px; overflow: hidden; }
.row { display: flex; flex: none; height: 122px; }
.no { width: 29px; padding-left: 12px; font: 700 11.500px/14px "Noto Sans", sans-serif; color: #797e81; flex: none; }
.thumb { outline: 1px solid #c8cccc; }
.sel .thumb { margin: -1px; outline: none; }
.sel .no { height: 29px; color: #fff; background: #e57d33; clip-path: polygon(12px 0, 100% 0, 100% 100%, 12px 50%); margin-top: -1px; }
.anim { margin-top: 15px; }
.blue-t { fill: #fff; font-size: 7.300px; }
.blue-t .h { font-size: 9.500px; }
.mini { font-size: 7.200px; fill: #111; }
.mini .h { font-size: 9.700px; }
.mini .s { font: 5.800px Lato, sans-serif; }
.tiny { font-size: 4.500px; fill: #000; font-weight: 700; }
.tiny .cy { fill: #1598ca; font-size: 5.500px; }
.tiny .re { fill: #e31b1b; }
.sbar { width: 17px; background: #cbd0d2; display: flex; flex-direction: column; align-items: center; justify-content: space-between; padding: 5px 0 3px; position: relative; }
.flip { transform: rotate(180deg); }
.grip { position: absolute; top: 345px; width: 13px; height: 23px; background: #f7f8f8; border: 1px solid #b5babd; display: flex; flex-direction: column; gap: 3px; padding: 6px 2px; }
.grip i { height: 1px; background: #b5babd; }

.main { flex: 1; display: flex; flex-direction: column; min-width: 0; }
.editor { flex: 1; display: flex; min-height: 0; border-bottom: 1px solid #b0b6b8; }
.canvas { flex: 1; padding: 16px 0 0 110px; }
.slide { position: relative; width: 723px; height: 541px; background: #f0f2f0; box-shadow: 0 0 0 1px #b9bfbf, 1px 2px 5px #9da2a2; display: flex; flex-direction: column; }
.logo-cn { font-size: 14px; font-weight: 700; fill: #46494b; }
.logo-cn.dark { font-size: 13.400px; }
.logo-en { font: 700 8px "Liberation Sans", sans-serif; fill: #444; }
.logo-red { font: 10px "Liberation Sans", sans-serif; fill: #c23b32; }
.badge-txt { font-size: 10.800px; font-weight: 700; fill: #fff; }
.slogan { font-size: 12px; fill: #2470a8; font-weight: 500; }
h1 { margin: -21px 0 0; font-size: 43px; line-height: 48px; font-weight: 300; text-align: center; color: #181818; }
.body { list-style: none; margin: 34px 0 0; padding: 0 0 0 71px; font-size: 31.600px; line-height: 36px; font-weight: 300; color: #181818; }
.body li { position: relative; height: 72.200px; }
.body li::before { content: ""; position: absolute; left: -26px; top: 16px; width: 7px; height: 7px; border-radius: 50%; background: #181818; }
.body p { margin: 0; padding-left: 8px; display: flex; align-items: center; font: 400 25.500px/35px Lato, sans-serif; }
.body p::before { content: ""; width: 15px; height: 2px; margin-right: 9px; background: #181818; }
.foot { position: absolute; bottom: 0; left: 0; }
.ime { position: absolute; left: 510px; top: 373px; width: 166px; height: 22px; border: 1px solid #bccbdb; background: #f7fafc; box-shadow: 1px 1px 1px #bcc5cd; display: flex; align-items: center; gap: 7.800px; }
.sogou { margin: -5px -4px 0 -13px; }
.skin { margin-left: -4px; }
.ime b { color: #1d6cba; font-size: 15px; line-height: 20px; }
.right { width: 19px; border-right: 1px solid #b7bdc0; padding-top: 10px; padding-bottom: 20px; }
.right .grip { top: 315px; height: 24px; }
.pages { display: flex; flex-direction: column; align-items: center; gap: 7px; }
.notes { height: 31px; padding: 5px 8px; font-size: 15.300px; line-height: 18px; border-right: 1px solid #b7bdc0; color: #333; }
.side { width: 42px; flex: none; background: #e8ecec; position: relative; padding-top: 8px; }
.side div { height: 47.200px; display: flex; flex-direction: column; align-items: center; gap: 3px; padding-right: 2px; }
.side div svg { width: 17px; height: 15px; }
.handle { position: absolute; right: 0; top: 262px; width: 3px; height: 98px; background: #f0771f; }
.status { height: 6px; flex: none; background: #dce0e0; border-top: 1px solid #b2b8ba; }
.status i { display: block; width: 22px; height: 5px; margin-left: 923px; background: #efb88f; }
.watermark { position: absolute; left: 1088px; top: 42px; }
.wm { font-size: 39px; font-weight: 700; fill: #f4f5f5; }
.wm-shade { font-size: 39px; font-weight: 700; fill: #8b9090; fill-opacity: .7; }

.player { height: 43px; background: #242424; display: flex; flex-direction: column; }
.progress { height: 3px; background: #333; display: flex; flex: none; }
.played { width: 71px; background: #f68e12; }
.buffered { width: 205px; background: #666; }
.controls { flex: 1; display: flex; align-items: center; color: #858585; }
.play { width: 38px; height: 40px; padding: 13px 0 0 12px; border-right: 1px solid #303030; }
.play svg { height: 17px; }
.time { padding-left: 10px; margin-right: auto; font: 11px/16px "Noto Sans", sans-serif; padding-top: 2px; }
.time span { color: #c4c4c4; }
.hd { width: 46px; height: 22px; margin: 0 11px 0 10px; border-radius: 11px; background: #3c3c3c; color: #b2b2b2; text-align: center; line-height: 21px; }
.vol { margin-left: 2px; }
.shrink { margin: 0 14px 0 11px; }
.tvname { color: #c3c3c3; font-size: 12.400px; margin: 0 8px 0 2px; }
```
